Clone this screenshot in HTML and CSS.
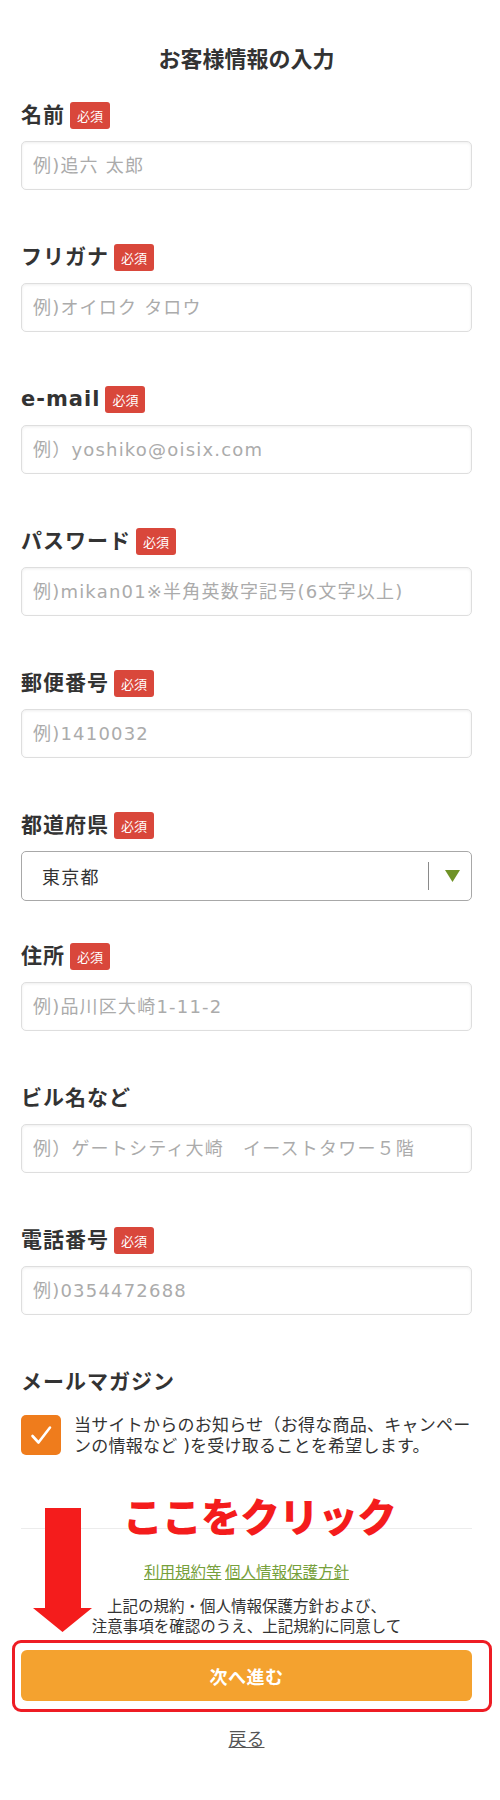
FILE: index.html
```html
<!DOCTYPE html>
<html lang="ja">
<head>
<meta charset="utf-8">
<title>お客様情報の入力</title>
<link rel="stylesheet" href="styles.css">
</head>
<body>
<div class="page">
  <h1 class="title">お客様情報の入力</h1>
  <form class="form">
    <div class="field">
      <div class="label-row"><span class="label">名前</span><span class="badge">必須</span></div>
      <input class="input" type="text" placeholder="例)追六 太郎">
    </div>
    <div class="field">
      <div class="label-row"><span class="label">フリガナ</span><span class="badge">必須</span></div>
      <input class="input" type="text" placeholder="例)オイロク タロウ">
    </div>
    <div class="field">
      <div class="label-row"><span class="label">e-mail</span><span class="badge">必須</span></div>
      <input class="input" type="text" placeholder="例）yoshiko@oisix.com">
    </div>
    <div class="field">
      <div class="label-row"><span class="label">パスワード</span><span class="badge">必須</span></div>
      <input class="input" type="text" placeholder="例)mikan01※半角英数字記号(6文字以上)">
    </div>
    <div class="field">
      <div class="label-row"><span class="label">郵便番号</span><span class="badge">必須</span></div>
      <input class="input" type="text" placeholder="例)1410032">
    </div>
    <div class="field field-select">
      <div class="label-row"><span class="label">都道府県</span><span class="badge">必須</span></div>
      <div class="select">
        <span class="select-value">東京都</span>
        <span class="select-divider"></span>
        <svg class="select-arrow" width="15" height="12" viewBox="0 0 15 12"><polygon points="0,0 15,0 7.5,12" fill="#6f9226"/></svg>
      </div>
    </div>
    <div class="field">
      <div class="label-row"><span class="label">住所</span><span class="badge">必須</span></div>
      <input class="input" type="text" placeholder="例)品川区大崎1-11-2">
    </div>
    <div class="field">
      <div class="label-row"><span class="label">ビル名など</span></div>
      <input class="input" type="text" placeholder="例）ゲートシティ大崎　イーストタワー５階">
    </div>
    <div class="field">
      <div class="label-row"><span class="label">電話番号</span><span class="badge">必須</span></div>
      <input class="input" type="text" placeholder="例)0354472688">
    </div>
    <div class="mailmag">
      <div class="label-row"><span class="label">メールマガジン</span></div>
      <div class="check-row">
        <span class="checkbox">
          <svg width="40" height="40" viewBox="0 0 40 40"><polyline points="11.5,21 17.5,27.5 29,12.5" fill="none" stroke="#fff" stroke-width="2.6" stroke-linecap="round" stroke-linejoin="round"/></svg>
        </span>
        <span class="check-text">当サイトからのお知らせ（お得な商品、キャンペーンの情報など )を受け取ることを希望します。</span>
      </div>
    </div>
    <div class="divider"></div>
    <p class="links"><a href="#">利用規約等</a> <a href="#">個人情報保護方針</a></p>
    <p class="note">上記の規約・個人情報保護方針および、<br>注意事項を確認のうえ、上記規約に同意して</p>
    <div class="cta-frame">
      <button class="btn" type="button">次へ進む</button>
    </div>
    <p class="back"><a href="#">戻る</a></p>
  </form>
  <svg class="arrow" width="59" height="124" viewBox="0 0 59 124"><polygon points="12,0 48,0 48,100 59,100 29.5,124 0,100 12,100" fill="#f41c1c"/></svg>
  <div class="click-note">ここをクリック</div>
</div>
</body>
</html>
```

FILE: styles.css
```css
body {
  margin: 0;
  background: #fff;
  color: #333;
  font-family: "DejaVu Sans", "Noto Sans CJK JP", sans-serif;
}

.page {
  position: relative;
  padding: 42px 28px 60px 21px;
}

.title {
  margin: 0;
  font-family: "Noto Sans CJK JP", sans-serif;
  font-size: 22px;
  font-weight: 700;
  line-height: 30px;
  text-align: center;
  color: #333;
}

.form {
  margin: 29px 0 0;
}

.field {
  margin-bottom: 53px;
}

.field-select {
  margin-bottom: 41px;
}

.label-row {
  display: flex;
  align-items: center;
  height: 28px;
  gap: 5px;
}

.label {
  font-family: "DejaVu Sans", "Noto Sans CJK JP", sans-serif;
  font-size: 21px;
  font-weight: 700;
  letter-spacing: 1px;
  line-height: 28px;
  color: #333;
}

.badge {
  display: inline-block;
  height: 27px;
  line-height: 27px;
  padding: 0 7px;
  background: #d9473b;
  border-radius: 3px;
  color: #fff;
  font-family: "Noto Sans CJK JP", sans-serif;
  font-size: 13px;
}

.input {
  display: block;
  box-sizing: border-box;
  width: 100%;
  height: 49px;
  margin: 12px 0 0;
  padding: 0 11px;
  border: 1px solid #dedede;
  border-radius: 5px;
  box-shadow: inset 0 1px 3px rgba(0, 0, 0, 0.07);
  background: #fff;
  color: #333;
  font-family: "DejaVu Sans", "Noto Sans CJK JP", sans-serif;
  font-size: 18px;
  letter-spacing: 1.2px;
  outline: none;
}

.input::placeholder {
  color: #ababab;
}

.select {
  display: flex;
  align-items: center;
  box-sizing: border-box;
  height: 50px;
  margin-top: 12px;
  padding: 0 11px 0 20px;
  border: 1px solid #a8a8a8;
  border-radius: 5px;
}

.select-value {
  flex: 1;
  font-family: "Noto Sans CJK JP", sans-serif;
  font-size: 18px;
  letter-spacing: 1.2px;
  color: #333;
}

.select-divider {
  width: 1px;
  height: 28px;
  background: #8a8a8a;
  margin-right: 16px;
}

.select-arrow {
  display: block;
}

.check-row {
  display: flex;
  align-items: flex-start;
  gap: 13px;
  margin-top: 19px;
}

.checkbox {
  flex: none;
  width: 40px;
  height: 40px;
  background: #ef7c1c;
  border-radius: 5px;
}

.checkbox svg {
  display: block;
}

.check-text {
  flex: 1;
  font-family: "DejaVu Sans", "Noto Sans CJK JP", sans-serif;
  font-size: 17px;
  letter-spacing: 0.25px;
  line-height: 21px;
  color: #333;
}

.divider {
  height: 1px;
  background: #ececec;
  margin-top: 71px;
}

.links {
  margin: 32px 0 0;
  text-align: center;
  font-family: "Noto Sans CJK JP", sans-serif;
  font-size: 15.5px;
  line-height: 20px;
}

.links a {
  color: #76a03b;
  text-decoration: underline;
}

.note {
  margin: 14px 0 0;
  text-align: center;
  font-family: "Noto Sans CJK JP", sans-serif;
  font-size: 15.5px;
  line-height: 20px;
  color: #333;
}

.cta-frame {
  margin: 5px -20px 0 -9px;
  padding: 7px 17px 8px 6px;
  border: 3px solid #ee1c24;
  border-radius: 9px;
}

.btn {
  display: block;
  width: 100%;
  height: 51px;
  padding: 0;
  border: none;
  border-radius: 6px;
  background: #f4a22f;
  color: #fff;
  font-family: "Noto Sans CJK JP", sans-serif;
  font-size: 18px;
  font-weight: 700;
  letter-spacing: 0.5px;
}

.back {
  margin: 14px 0 0;
  text-align: center;
  font-family: "Noto Sans CJK JP", sans-serif;
  font-size: 18px;
  line-height: 24px;
}

.back a {
  color: #555;
  text-decoration: underline;
}

.arrow {
  position: absolute;
  left: 33px;
  top: 1508px;
}

.click-note {
  position: absolute;
  left: 123px;
  top: 1493px;
  font-family: "Noto Sans CJK JP", sans-serif;
  font-size: 40px;
  font-weight: 900;
  line-height: 44px;
  letter-spacing: -1px;
  color: #f41c1c;
  white-space: nowrap;
}
```
